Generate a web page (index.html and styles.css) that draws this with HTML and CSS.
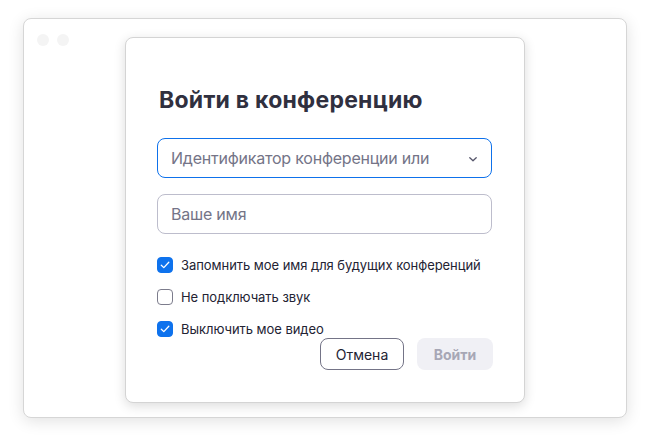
FILE: index.html
```html
<!DOCTYPE html>
<html lang="ru">
<head>
<meta charset="utf-8">
<link rel="stylesheet" href="styles.css">
</head>
<body>
<div class="window">
  <div class="traffic">
    <span class="dot"></span>
    <span class="dot"></span>
  </div>
  <div class="dialog">
    <h1 class="title">Войти в конференцию</h1>
    <div class="field field-active">
      <span class="placeholder">Идентификатор конференции или</span>
      <svg class="chevron" width="8" height="5" viewBox="0 0 8 5"><path d="M0.8 0.8 L4 3.8 L7.2 0.8" fill="none" stroke="#55556a" stroke-width="1.3" stroke-linecap="round" stroke-linejoin="round"/></svg>
    </div>
    <div class="field">
      <span class="placeholder">Ваше имя</span>
    </div>
    <div class="checks">
      <label class="check">
        <span class="box box-on"><svg width="10" height="8" viewBox="0 0 10 8"><path d="M1.3 4.2 L3.8 6.6 L8.8 1.3" fill="none" stroke="#fff" stroke-width="1.3" stroke-linecap="round" stroke-linejoin="round"/></svg></span>
        <span class="check-text">Запомнить мое имя для будущих конференций</span>
      </label>
      <label class="check">
        <span class="box"></span>
        <span class="check-text">Не подключать звук</span>
      </label>
      <label class="check">
        <span class="box box-on"><svg width="10" height="8" viewBox="0 0 10 8"><path d="M1.3 4.2 L3.8 6.6 L8.8 1.3" fill="none" stroke="#fff" stroke-width="1.3" stroke-linecap="round" stroke-linejoin="round"/></svg></span>
        <span class="check-text">Выключить мое видео</span>
      </label>
    </div>
    <div class="actions">
      <button class="btn btn-cancel">Отмена</button>
      <button class="btn btn-join">Войти</button>
    </div>
  </div>
</div>
</body>
</html>
```
FILE: styles.css
```css
* { box-sizing: border-box; }
html, body { margin: 0; padding: 0; }
body {
  width: 650px;
  height: 446px;
  background: #ffffff;
  font-family: Inter, "Liberation Sans", Arial, sans-serif;
  padding: 18px 0 0 23px;
  overflow: hidden;
}
.window {
  position: relative;
  width: 604px;
  height: 400px;
  background: #fff;
  border: 1px solid #d6d6d6;
  border-radius: 8px;
  box-shadow: 0 3px 16px rgba(0,0,0,0.12);
}
.traffic {
  display: flex;
  gap: 8px;
  padding: 15px 0 0 13px;
}
.dot {
  width: 12px;
  height: 12px;
  border-radius: 50%;
  background: #f4f4f4;
}
.dialog {
  position: absolute;
  left: 101px;
  top: 18px;
  width: 400px;
  height: 366px;
  background: #fff;
  border: 1px solid #d4d4d4;
  border-radius: 8px;
  box-shadow: 0 3px 12px rgba(0,0,0,0.14);
  padding: 48px 31px 0 31px;
  display: flex;
  flex-direction: column;
}
.title {
  margin: 0 0 24px 2px;
  font-size: 23px;
  line-height: 28px;
  font-weight: 700;
  color: #30303f;
  letter-spacing: 0.25px;
}
.field {
  height: 40px;
  width: 335px;
  border: 1px solid #bdbdcc;
  border-radius: 8px;
  display: flex;
  align-items: center;
  justify-content: space-between;
  padding: 0 14px 0 13px;
  margin-bottom: 16px;
}
.field-active { border-color: #0e71eb; }
.placeholder {
  font-size: 16px;
  color: #747487;
  letter-spacing: -0.22px;
}
.chevron { margin-top: 2px; }
.checks {
  display: flex;
  flex-direction: column;
  gap: 16px;
  margin-top: 7px;
}
.check {
  display: flex;
  align-items: center;
  gap: 8px;
  height: 16px;
}
.box {
  width: 16px;
  height: 16px;
  border-radius: 4px;
  border: 1px solid #7c7c8c;
  background: #fff;
  display: flex;
  align-items: center;
  justify-content: center;
  flex-shrink: 0;
}
.box-on {
  background: #0e72ed;
  border-color: #0e72ed;
}
.check-text {
  font-size: 13px;
  color: #232333;
  letter-spacing: -0.05px;
}
.actions {
  display: flex;
  justify-content: flex-end;
  gap: 13px;
  margin-top: 1px;
}
.btn {
  height: 32px;
  border-radius: 8px;
  font-family: inherit;
  font-size: 14px;
  padding: 0;
}
.btn-cancel {
  width: 84px;
  background: #fff;
  border: 1px solid #747487;
  color: #232333;
}
.btn-join {
  width: 76px;
  background: #f0f0f5;
  border: none;
  color: #a7a7b5;
  font-weight: 700;
}
```
